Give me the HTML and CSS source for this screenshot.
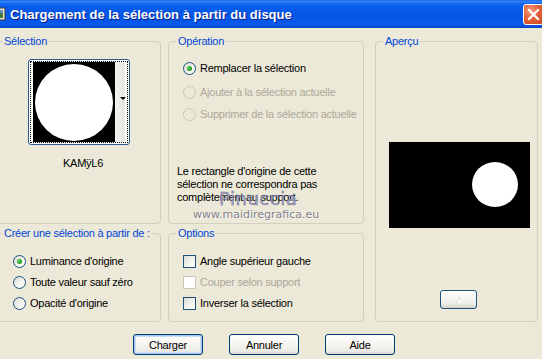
FILE: index.html
```html
<!DOCTYPE html>
<html lang="fr">
<head>
<meta charset="utf-8">
<title>Chargement de la sélection à partir du disque</title>
<link rel="stylesheet" href="styles.css">
</head>
<body>
<div class="window">
  <div class="titlebar">
    <svg class="app-icon" width="16" height="16" viewBox="0 0 16 16">
      <rect x="1" y="2" width="14" height="12" fill="#e8e4d0" stroke="#3a3a3a"/>
      <rect x="3" y="4" width="10" height="8" fill="#3f7a3a"/>
      <rect x="3" y="4" width="10" height="3" fill="#6a8fc8"/>
    </svg>
    <span class="title">Chargement de la sélection à partir du disque</span>
    <button class="close" aria-label="Fermer">
      <svg width="13" height="13" viewBox="0 0 13 13"><path d="M2 2 L11 11 M11 2 L2 11" stroke="#fff" stroke-width="2.2" stroke-linecap="square"/></svg>
    </button>
  </div>

  <div class="main">
    <section class="group g-selection">
      <span class="group-title">Sélection</span>
      <div class="thumb">
        <div class="thumb-inner">
          <div class="thumb-img"><div class="thumb-circle"></div></div>
          <div class="thumb-strip"><span class="arrow"></span></div>
        </div>
      </div>
      <div class="thumb-name">KAMÿL6</div>
    </section>

    <section class="group g-operation">
      <span class="group-title">Opération</span>
      <div class="opt op1"><span class="radio checked"></span><span>Remplacer la sélection</span></div>
      <div class="opt op2 disabled"><span class="radio"></span><span>Ajouter à la sélection actuelle</span></div>
      <div class="opt op3 disabled"><span class="radio"></span><span>Supprimer de la sélection actuelle</span></div>
      <p class="note">Le rectangle d'origine de cette<br>sélection ne correspondra pas<br>complètement au support.</p>
      <div class="watermark">
        <span class="wm-name">Pinuccia</span>
        <span class="wm-url">www.maidiregrafica.eu</span>
      </div>
    </section>

    <section class="group g-apercu">
      <span class="group-title">Aperçu</span>
      <div class="preview"><div class="preview-circle"></div></div>
      <button class="mini-btn" aria-label="Arrière-plan"></button>
    </section>

    <section class="group g-creer">
      <span class="group-title">Créer une sélection à partir de :</span>
      <div class="opt c1"><span class="radio checked"></span><span>Luminance d'origine</span></div>
      <div class="opt c2"><span class="radio"></span><span>Toute valeur sauf zéro</span></div>
      <div class="opt c3"><span class="radio"></span><span>Opacité d'origine</span></div>
    </section>

    <section class="group g-options">
      <span class="group-title">Options</span>
      <div class="opt c1"><span class="check"></span><span>Angle supérieur gauche</span></div>
      <div class="opt c2 disabled"><span class="check"></span><span>Couper selon support</span></div>
      <div class="opt c3"><span class="check"></span><span>Inverser la sélection</span></div>
    </section>
  </div>

  <div class="buttons">
    <button class="btn default">Charger</button>
    <button class="btn">Annuler</button>
    <button class="btn">Aide</button>
  </div>
</div>
</body>
</html>
```

FILE: styles.css
```css
* { box-sizing: border-box; }
html, body { margin: 0; padding: 0; }
body {
  width: 542px;
  height: 359px;
  overflow: hidden;
  background: #ECE9D8;
  font-family: "Liberation Sans", Arial, sans-serif;
  font-size: 11px;
  letter-spacing: -0.25px;
  color: #000;
}
.window {
  width: 542px;
  height: 359px;
  display: flex;
  flex-direction: column;
}

/* Title bar */
.titlebar {
  height: 28px;
  flex: none;
  display: flex;
  align-items: center;
  background: linear-gradient(to bottom,
    #0A4BD8 0px, #3C8EF6 1px, #1A6CF4 3px, #0A5DEB 6px,
    #0656E6 14px, #0657E8 22px, #0A5CEF 24px, #0A4FD8 26px, #0946C6 28px);
}
.app-icon {
  margin-left: -10px;
  flex: none;
}
.title {
  margin-left: 4px;
  color: #fff;
  font-weight: bold;
  font-size: 13px;
  letter-spacing: 0;
  text-shadow: 1px 1px 0 #0A1E8C;
  padding-top: 1px;
}
.close {
  margin-left: auto;
  margin-right: -2px;
  margin-top: 1px;
  width: 21px;
  height: 21px;
  padding: 0;
  border: 1px solid #fff;
  border-radius: 3px;
  background: radial-gradient(circle at 35% 30%, #F39B7E 0%, #E4623A 45%, #C8421D 100%);
  display: flex;
  align-items: center;
  justify-content: center;
}

/* Main grid */
.main {
  margin-top: 13px;
  margin-left: -6px;
  display: grid;
  grid-template-columns: 167px 196px 167px;
  grid-template-rows: 183px 89px;
  column-gap: 7px;
  row-gap: 9px;
}
.group {
  position: relative;
  border: 1px solid #D0D0BF;
  border-radius: 4px;
}
.group-title {
  position: absolute;
  top: -8px;
  left: 7px;
  padding: 0 2px;
  line-height: 14px;
  background: #ECE9D8;
  color: #0046D5;
  white-space: nowrap;
}
.g-selection { grid-column: 1; grid-row: 1; display: flex; flex-direction: column; align-items: flex-start; }
.g-operation { grid-column: 2; grid-row: 1; }
.g-apercu { grid-column: 3; grid-row: 1 / span 2; margin-left: 4px; display: flex; flex-direction: column; align-items: center; }
.g-creer { grid-column: 1; grid-row: 2; }
.g-options { grid-column: 2; grid-row: 2; }

/* Sélection thumbnail */
.thumb {
  margin-top: 17px;
  margin-left: 33px;
  width: 102px;
  height: 86px;
  border: 1px solid #2B5A8E;
  border-radius: 3px;
  background: #fff;
  padding: 1px;
}
.thumb-inner {
  height: 100%;
  border: 1px dotted #000;
  padding: 0 2px;
  display: flex;
}
.thumb-img {
  width: 82px;
  height: 100%;
  background: #000;
  display: flex;
  align-items: center;
  justify-content: center;
}
.thumb-circle {
  width: 78px;
  height: 77px;
  border-radius: 50%;
  background: #fff;
}
.thumb-strip {
  width: 10px;
  height: 100%;
  background: linear-gradient(to right, #F4F4F0, #E6E6E0);
  position: relative;
}
.arrow {
  position: absolute;
  right: -1px;
  top: 35px;
  width: 0;
  height: 0;
  border-left: 3px solid transparent;
  border-right: 3px solid transparent;
  border-top: 3px solid #000;
}
.thumb-name {
  margin-top: 12px;
  margin-left: 68px;
  line-height: 13px;
}

/* Options / radios */
.opt {
  display: flex;
  align-items: center;
  gap: 4px;
  height: 14px;
  line-height: 14px;
  white-space: nowrap;
}
.opt.disabled { color: #ACA899; }
.g-operation .opt { margin-left: 14px; }
.op1 { margin-top: 19px; }
.op2 { margin-top: 10px; }
.op3 { margin-top: 8px; }
.g-creer .opt, .g-options .opt { margin-left: 14px; }
.g-creer .opt { margin-left: 18px; }
.c1 { margin-top: 20px; }
.c2 { margin-top: 7px; }
.c3 { margin-top: 7px; }

.radio {
  flex: none;
  width: 13px;
  height: 13px;
  border-radius: 50%;
  border: 1px solid #1C5180;
  background: linear-gradient(135deg, #DCDCD7 0%, #F4F4F0 60%, #FFFFFF 100%);
  position: relative;
}
.radio.checked::after {
  content: "";
  position: absolute;
  left: 3px;
  top: 3px;
  width: 5px;
  height: 5px;
  border-radius: 50%;
  background: radial-gradient(circle at 40% 40%, #5FD35F 0%, #21A121 60%, #1A8A1A 100%);
}
.disabled .radio {
  border-color: #CAC8BB;
  background: #ECE9D8;
}
.check {
  flex: none;
  width: 13px;
  height: 13px;
  border: 1px solid #1C5180;
  background: linear-gradient(135deg, #DCDCD7 0%, #F4F4F0 60%, #FFFFFF 100%);
}
.disabled .check {
  border-color: #CAC8BB;
  background: #FFFFFF;
}

.note {
  margin: 44px 0 0 8px;
  line-height: 13px;
}
.watermark {
  position: absolute;
  left: 24px;
  top: 148px;
  display: flex;
  flex-direction: column;
  align-items: center;
  pointer-events: none;
}
.wm-name {
  font-family: "DejaVu Sans", sans-serif;
  font-size: 18px;
  letter-spacing: 0.5px;
  line-height: 18px;
  color: rgba(160, 160, 200, 0.9);
  -webkit-text-stroke: 0.5px rgba(105, 105, 145, 0.95);
  margin-left: 4px;
}
.wm-url {
  font-family: "DejaVu Sans", sans-serif;
  font-size: 11px;
  letter-spacing: 0px;
  line-height: 13px;
  color: rgba(115, 115, 135, 0.9);
  text-shadow: 1px 1px 0 rgba(255,255,255,0.6);
}

/* Aperçu */
.preview {
  margin-top: 100px;
  margin-left: 5px;
  width: 141px;
  height: 86px;
  background: #000;
  position: relative;
}
.preview-circle {
  position: absolute;
  left: 83px;
  top: 20px;
  width: 46px;
  height: 45px;
  border-radius: 50%;
  background: #fff;
}
.mini-btn {
  margin-top: 62px;
  margin-left: 3px;
  width: 37px;
  height: 19px;
  padding: 0;
  border: 1px solid #1C5180;
  border-radius: 3px;
  background:
    repeating-conic-gradient(#E4E4E0 0 25%, #FAFAF8 0 50%) 14px 6px / 6px 6px no-repeat,
    linear-gradient(to bottom, #FFFFFF 0%, #F0F0EA 70%, #D6D0C5 100%);
}

/* Bottom buttons */
.buttons {
  margin-top: 12px;
  padding-left: 133px;
  display: flex;
  gap: 26px;
}
.btn {
  width: 70px;
  height: 21px;
  padding: 0;
  font-family: "Liberation Sans", Arial, sans-serif;
  font-size: 11px;
  letter-spacing: -0.25px;
  color: #000;
  border: 1px solid #003C74;
  border-radius: 3px;
  background: linear-gradient(to bottom, #FFFFFF 0%, #F5F4EF 50%, #ECEBE6 85%, #D6D0C5 100%);
}
.btn.default {
  box-shadow: inset 0 0 0 1px #A9C5F2, inset 0 0 0 2px #CBDCF7;
}
```
